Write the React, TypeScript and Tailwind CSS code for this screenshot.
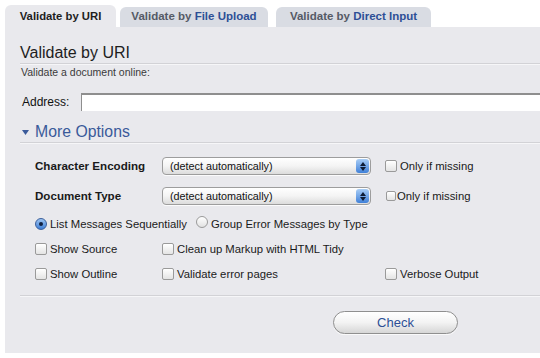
import React from "react";

const font = { fontFamily: '"Liberation Sans", Arial, Helvetica, sans-serif' };

function Checkbox({ small }: { small?: boolean }) {
  return (
    <span
      className={`inline-block shrink-0 rounded-[2px] border border-[#9a9a9a] bg-gradient-to-b from-white to-[#e4e4e4] shadow-[inset_0_1px_0_#fff] ${
        small ? "h-[10px] w-[10px]" : "h-[12px] w-[12px]"
      }`}
    />
  );
}

function Radio({ checked }: { checked?: boolean }) {
  if (checked) {
    return (
      <span className="flex h-[12px] w-[12px] shrink-0 items-center justify-center rounded-full border border-[#3b5f9c] bg-gradient-to-b from-[#9cc3f0] to-[#3f7fd6]">
        <span className="h-[4px] w-[4px] rounded-full bg-[#102040]" />
      </span>
    );
  }
  return (
    <span className="inline-block h-[12px] w-[12px] shrink-0 rounded-full border border-[#9a9a9a] bg-gradient-to-b from-white to-[#e2e2e2]" />
  );
}

function Select() {
  return (
    <div className="relative flex h-[18px] w-[209px] items-center rounded-[4px] border border-[#9d9d9d] bg-gradient-to-b from-white via-[#f4f4f4] to-[#dcdcdc] pl-[7px] text-[10.8px] text-[#111] shadow-[0_1px_0_rgba(255,255,255,0.8)]">
      (detect automatically)
      <span className="absolute right-[1px] top-[1px] flex h-[14px] w-[13px] flex-col items-center justify-center gap-[1px] rounded-[3px] bg-gradient-to-b from-[#a8cdf5] to-[#3f80d8]">
        <svg width="6" height="4" viewBox="0 0 6 4">
          <path d="M0 4 L3 0 L6 4 Z" fill="#0d1b33" />
        </svg>
        <svg width="6" height="4" viewBox="0 0 6 4">
          <path d="M0 0 L6 0 L3 4 Z" fill="#0d1b33" />
        </svg>
      </span>
    </div>
  );
}

function Line() {
  return <div className="h-[1px] bg-[#d2d2d6] shadow-[0_1px_0_#f6f6f8]" />;
}

export default function App() {
  return (
    <div className="h-[358px] w-[540px] overflow-hidden bg-white pl-[5px] pt-[5px]" style={font}>
      {/* Tabs */}
      <div className="flex h-[22px] items-end">
        <div className="flex h-[22px] w-[111px] items-center justify-center rounded-t-[6px] bg-[#e9e9ed] text-[11.3px] font-bold text-[#1e1e1e]">
          Validate by URI
        </div>
        <div className="ml-[4px] flex h-[20px] w-[148px] items-center justify-center rounded-t-[6px] bg-[#d9dce3] text-[11.5px] font-bold text-[#555a66]">
          Validate by&nbsp;<span className="text-[#2d4f96]">File Upload</span>
        </div>
        <div className="ml-[8px] flex h-[20px] w-[155px] items-center justify-center rounded-t-[6px] bg-[#d9dce3] text-[11.5px] font-bold text-[#555a66]">
          Validate by&nbsp;<span className="text-[#2d4f96]">Direct Input</span>
        </div>
      </div>

      {/* Panel */}
      <div className="h-[326px] bg-[#e9e9ed] pl-[15px]">
        <div className="pt-[17px] text-[16px] leading-[18px] text-[#1e1e1e]">Validate by URI</div>
        <div className="mt-[1px]">
          <Line />
        </div>
        <div className="flex h-[18px] items-center pl-[1px] text-[10.5px] text-[#3a3a3a]">
          Validate a document online:
        </div>
        <div className="mt-[11px] flex h-[18px] items-center">
          <span className="w-[61px] pl-[2px] text-[12px] text-[#111]">Address:</span>
          <div className="h-[18px] flex-1 border-t-[2px] border-l border-[#8e8e8e] bg-white" />
        </div>
        <div className="flex items-center pt-[12px] leading-[18px]">
          <svg width="7" height="5" viewBox="0 0 7 5" className="ml-[2px] mr-[6px]">
            <path d="M0 0 L7 0 L3.5 5 Z" fill="#3a5a9a" />
          </svg>
          <span className="text-[15.8px] text-[#3a5a9a]">More Options</span>
        </div>
        <div className="mt-[1px]">
          <Line />
        </div>

        <div className="pl-[15px] text-[11.3px] text-[#1a1a1a]">
          <div className="mt-[14px] flex h-[18px] items-center">
            <span className="w-[127px] text-[11.6px] font-bold">Character Encoding</span>
            <Select />
            <span className="ml-[14px] flex items-center gap-[3px]">
              <Checkbox />
              <span>Only if missing</span>
            </span>
          </div>
          <div className="mt-[12px] flex h-[18px] items-center">
            <span className="w-[127px] text-[11.6px] font-bold">Document Type</span>
            <Select />
            <span className="ml-[15px] flex items-center gap-[1px]">
              <Checkbox small />
              <span>Only if missing</span>
            </span>
          </div>
          <div className="mt-[11px] flex h-[16px] items-center">
            <Radio checked />
            <span className="ml-[3px]">List Messages Sequentially</span>
            <span className="ml-[9px]">
              <Radio />
            </span>
            <span className="ml-[3px]">Group Error Messages by Type</span>
          </div>
          <div className="mt-[9px] flex h-[16px] items-center">
            <span className="flex w-[127px] items-center gap-[3px]">
              <Checkbox />
              <span>Show Source</span>
            </span>
            <span className="flex items-center gap-[3px]">
              <Checkbox />
              <span>Clean up Markup with HTML Tidy</span>
            </span>
          </div>
          <div className="mt-[9px] flex h-[16px] items-center">
            <span className="flex w-[127px] items-center gap-[3px]">
              <Checkbox />
              <span>Show Outline</span>
            </span>
            <span className="flex w-[223px] items-center gap-[3px]">
              <Checkbox />
              <span>Validate error pages</span>
            </span>
            <span className="flex items-center gap-[3px]">
              <Checkbox />
              <span>Verbose Output</span>
            </span>
          </div>
        </div>

        <div className="mt-[13px]">
          <Line />
        </div>
        <div className="mt-[15px] pl-[313px]">
          <div className="flex h-[23px] w-[125px] items-center justify-center rounded-full border border-[#8f8f8f] bg-gradient-to-b from-white via-[#f3f3f3] to-[#d6d6d6] text-[13px] text-[#2d4f96] shadow-[0_1px_0_rgba(255,255,255,0.7)]">
            Check
          </div>
        </div>
      </div>
    </div>
  );
}
